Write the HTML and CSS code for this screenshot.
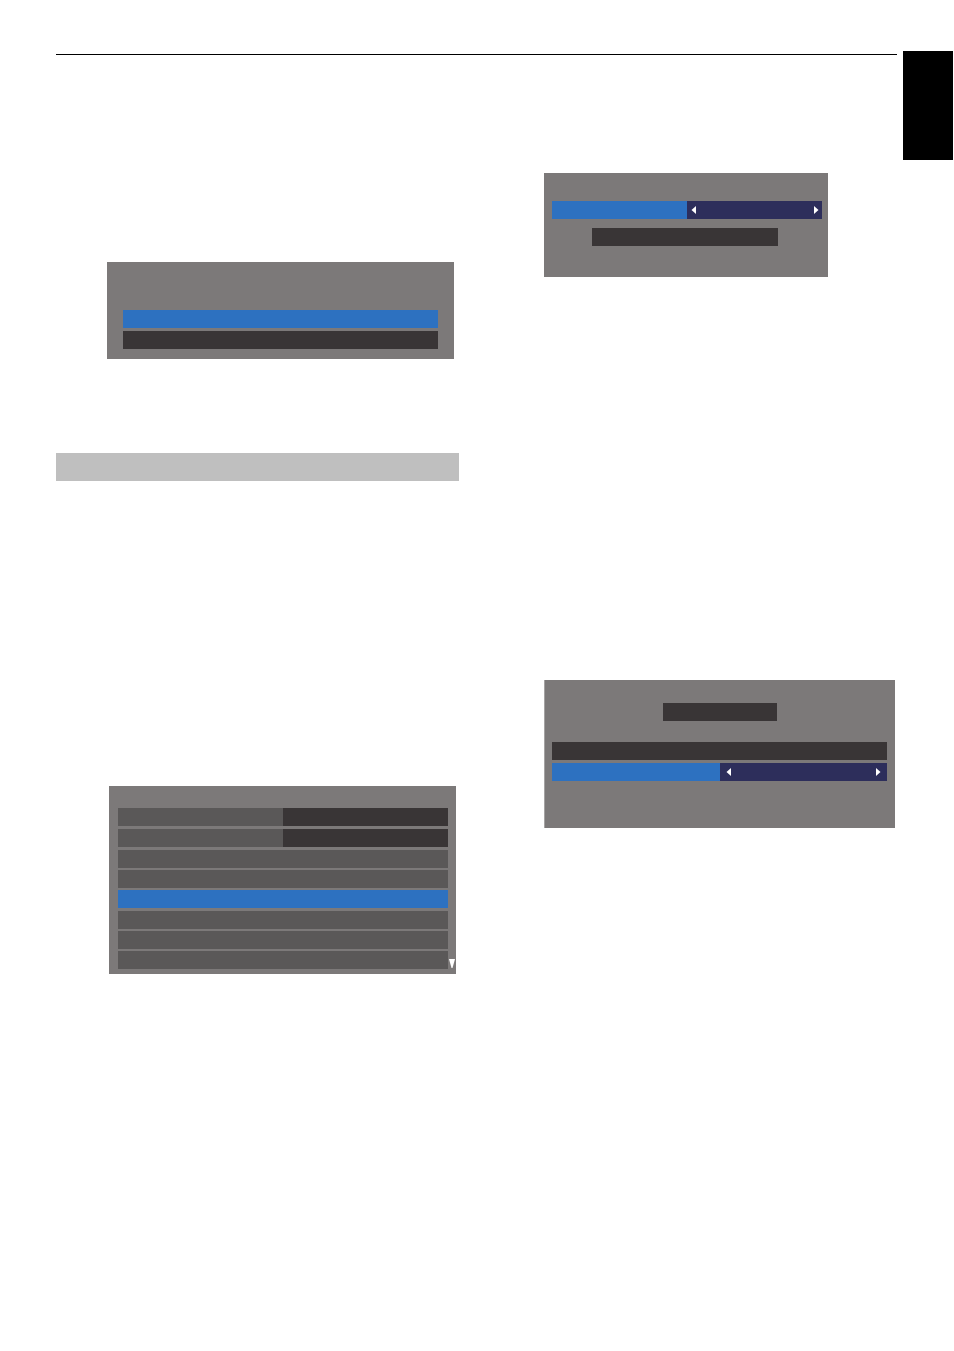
FILE: index.html
```
<!DOCTYPE html>
<html lang="en">
<head>
    <meta charset="UTF-8">
    <meta name="viewport" content="width=device-width, initial-scale=1.0">
    <title>Menu</title>
    <link rel="stylesheet" href="styles.css">
</head>
<body>
    <header class="header">
        <hr class="rule">
        <div class="tab"></div>
    </header>

    <main class="columns">
        <div class="column column-left">
            <section class="panel panel-prompt">
                <button class="row active" aria-label="Option 1"></button>
                <button class="row dark" aria-label="Option 2"></button>
            </section>

            <div class="heading"></div>

            <section class="panel panel-menu">
                <button class="row split" aria-label="Item 1"><span class="value"></span></button>
                <button class="row split" aria-label="Item 2"><span class="value"></span></button>
                <div class="group">
                    <button class="row" aria-label="Item 3"></button>
                    <button class="row" aria-label="Item 4"></button>
                    <button class="row active" aria-label="Item 5"></button>
                </div>
                <div class="group">
                    <button class="row" aria-label="Item 6"></button>
                    <button class="row" aria-label="Item 7"></button>
                    <button class="row" aria-label="Item 8"></button>
                </div>
                <svg class="more" width="6" height="9" viewBox="0 0 6 9" fill="#fff">
                    <path d="M0 0h6L3.5 9h-1z"></path>
                </svg>
            </section>
        </div>

        <div class="column column-right">
            <section class="panel panel-select">
                <div class="row active split">
                    <div class="value stepper">
                        <button class="arrow" aria-label="Previous">
                            <svg width="5" height="8" viewBox="0 0 5 8" fill="#fff"><path d="M5 0v8L0.5 4z"></path></svg>
                        </button>
                        <button class="arrow" aria-label="Next">
                            <svg width="5" height="8" viewBox="0 0 5 8" fill="#fff"><path d="M0 0v8L4.5 4z"></path></svg>
                        </button>
                    </div>
                </div>
                <button class="row dark start" aria-label="Start"></button>
            </section>

            <section class="panel panel-tuning">
                <button class="row dark channel" aria-label="Channel"></button>
                <button class="row dark" aria-label="Setting"></button>
                <div class="row active split">
                    <div class="value stepper wide">
                        <button class="arrow" aria-label="Previous">
                            <svg width="5" height="8" viewBox="0 0 5 8" fill="#fff"><path d="M5 0v8L0.5 4z"></path></svg>
                        </button>
                        <button class="arrow" aria-label="Next">
                            <svg width="5" height="8" viewBox="0 0 5 8" fill="#fff"><path d="M0 0v8L4.5 4z"></path></svg>
                        </button>
                    </div>
                </div>
            </section>
        </div>
    </main>
</body>
</html>
```
FILE: styles.css
```
* {
    margin: 0;
    padding: 0;
    box-sizing: border-box;
}

body {
    background-color: #fff;
    min-height: 100vh;
    font-family: "Liberation Sans", sans-serif;
}

button {
    border: none;
    background: none;
    cursor: pointer;
}

.header {
    display: flex;
    gap: 6px;
    padding: 51px 1px 0 56px;
}

.rule {
    flex: 1;
    height: 1px;
    margin-top: 3px;
    border: none;
    background-color: #000;
}

.tab {
    width: 50px;
    height: 109px;
    background-color: #000;
}

.columns {
    display: grid;
    grid-template-columns: 403fr 353fr;
    gap: 85px;
    padding: 0 57px 0 56px;
}

.column {
    display: flex;
    flex-direction: column;
}

.column-left {
    padding-top: 102px;
}

.column-right {
    padding-top: 13px;
}

.panel {
    position: relative;
    display: flex;
    flex-direction: column;
    gap: 3px;
    background-color: #7c7979;
}

.panel-prompt {
    margin: 0 5px 0 51px;
    padding: 48px 16px 10px;
}

.heading {
    height: 28px;
    margin: 94px 0 305px;
    background-color: #bfbfbf;
}

.panel-menu {
    margin: 0 3px 0 53px;
    padding: 22px 8px 5px 9px;
}

.panel-select {
    gap: 9px;
    margin: 0 69px 403px 0;
    padding: 28px 6px 31px 8px;
}

.panel-tuning {
    margin-right: 2px;
    padding: 23px 8px 47px 7px;
    border-left: 1px solid #a5a3a3;
}

.group {
    display: flex;
    flex-direction: column;
    gap: 2px;
}

.row {
    display: block;
    height: 18px;
    background-color: #5a5858;
}

.row.dark {
    background-color: #393536;
}

.row.active {
    background-color: #2d71c0;
}

.row.split {
    display: flex;
    justify-content: flex-end;
}

.value {
    width: 50%;
    height: 18px;
    background-color: #393536;
}

.stepper {
    display: flex;
    align-items: center;
    justify-content: space-between;
    padding: 0 3px 0 4px;
    background-color: #2d2e5b;
}

.stepper.wide {
    padding: 0 6px;
}

.arrow {
    display: flex;
}

.start {
    margin: 0 44px 0 40px;
}

.channel {
    margin: 0 110px 18px 111px;
}

.more {
    position: absolute;
    right: 1px;
    bottom: 6px;
}
```
